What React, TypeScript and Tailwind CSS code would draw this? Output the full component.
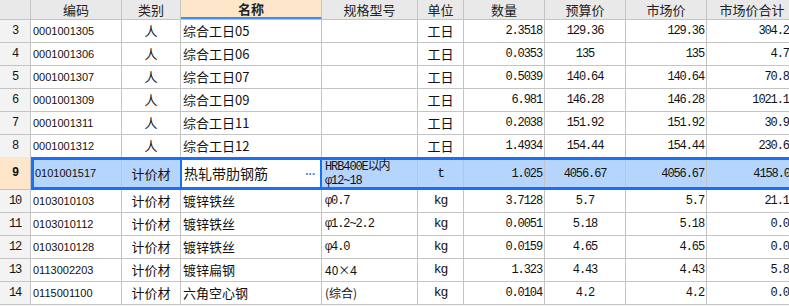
import React from "react"

type Row = {
  no: number
  code: string
  kind: string
  name: string
  spec: string[]
  unit: string
  qty: string
  budget: string
  market: string
  total: string
}

const rows: Row[] = [
  { no: 3, code: "0001001305", kind: "人", name: "综合工日05", spec: [], unit: "工日", qty: "2.3518", budget: "129.36", market: "129.36", total: "304.23" },
  { no: 4, code: "0001001306", kind: "人", name: "综合工日06", spec: [], unit: "工日", qty: "0.0353", budget: "135", market: "135", total: "4.77" },
  { no: 5, code: "0001001307", kind: "人", name: "综合工日07", spec: [], unit: "工日", qty: "0.5039", budget: "140.64", market: "140.64", total: "70.87" },
  { no: 6, code: "0001001309", kind: "人", name: "综合工日09", spec: [], unit: "工日", qty: "6.981", budget: "146.28", market: "146.28", total: "1021.18" },
  { no: 7, code: "0001001311", kind: "人", name: "综合工日11", spec: [], unit: "工日", qty: "0.2038", budget: "151.92", market: "151.92", total: "30.96" },
  { no: 8, code: "0001001312", kind: "人", name: "综合工日12", spec: [], unit: "工日", qty: "1.4934", budget: "154.44", market: "154.44", total: "230.64" },
  { no: 9, code: "0101001517", kind: "计价材", name: "热轧带肋钢筋", spec: ["HRB400E以内", "φ12~18"], unit: "t", qty: "1.025", budget: "4056.67", market: "4056.67", total: "4158.09" },
  { no: 10, code: "0103010103", kind: "计价材", name: "镀锌铁丝", spec: ["φ0.7"], unit: "kg", qty: "3.7128", budget: "5.7", market: "5.7", total: "21.16" },
  { no: 11, code: "0103010112", kind: "计价材", name: "镀锌铁丝", spec: ["φ1.2~2.2"], unit: "kg", qty: "0.0051", budget: "5.18", market: "5.18", total: "0.03" },
  { no: 12, code: "0103010128", kind: "计价材", name: "镀锌铁丝", spec: ["φ4.0"], unit: "kg", qty: "0.0159", budget: "4.65", market: "4.65", total: "0.07" },
  { no: 13, code: "0113002203", kind: "计价材", name: "镀锌扁钢", spec: ["40×4"], unit: "kg", qty: "1.323", budget: "4.43", market: "4.43", total: "5.86" },
  { no: 14, code: "0115001100", kind: "计价材", name: "六角空心钢", spec: ["(综合)"], unit: "kg", qty: "0.0104", budget: "4.2", market: "4.2", total: "0.04" },
]

const cjk = "font-['Noto_Sans_CJK_SC',sans-serif]"
const mono = "font-['Liberation_Mono','Noto_Sans_CJK_SC',monospace] tracking-[-1.1px]"
const code = "font-['Liberation_Sans',sans-serif] text-[11px]"
const line = "border-r border-[#c4c4c4]"

function Header() {
  const h = `flex items-center justify-center shrink-0 h-full ${line} text-[13px] text-[#222] ${cjk}`
  return (
    <div className="flex h-[20px] bg-[#e9e9e9] border-b border-[#c4c4c4]">
      <div className={`${h} w-[31px]`} />
      <div className={`${h} w-[91px]`}>编码</div>
      <div className={`${h} w-[59px]`}>类别</div>
      <div className={`${h} w-[141px] bg-[#fde6c9] font-bold border-b-2 border-b-[#3d8ef0]`}>名称</div>
      <div className={`${h} w-[96px]`}>规格型号</div>
      <div className={`${h} w-[46px]`}>单位</div>
      <div className={`${h} w-[81px]`}>数量</div>
      <div className={`${h} w-[81px]`}>预算价</div>
      <div className={`${h} w-[81px]`}>市场价</div>
      <div className={`${h} w-[91px]`}>市场价合计</div>
    </div>
  )
}

function Spec({ spec }: { spec: string[] }) {
  if (spec.length === 0) return null
  const isSans = spec[0] === "40×4" || spec[0] === "(综合)"
  return (
    <div className={`flex flex-col leading-[14px] text-[12px] ${isSans ? cjk : mono}`}>
      {spec.map((s) => (
        <span key={s} className="whitespace-nowrap">{s}</span>
      ))}
    </div>
  )
}

function PlainRow({ r }: { r: Row }) {
  const c = `flex items-center shrink-0 h-full ${line} text-[#111]`
  return (
    <div className="flex h-[23px] bg-white border-b border-[#c4c4c4]">
      <div className={`${c} w-[31px] justify-center bg-[#f3f3f3] text-[12px] ${mono}`}>{r.no}</div>
      <div className={`${c} w-[91px] pl-[2px] ${code}`}>{r.code}</div>
      <div className={`${c} w-[59px] justify-center text-[13px] ${cjk}`}>{r.kind}</div>
      <div className={`${c} w-[141px] pl-[2px] text-[13px] ${cjk}`}>{r.name}</div>
      <div className={`${c} w-[96px] pl-[3px]`}><Spec spec={r.spec} /></div>
      <div className={`${c} w-[46px] justify-center text-[13px] ${r.unit === "工日" ? cjk : mono}`}>{r.unit}</div>
      <div className={`${c} w-[81px] justify-end pr-[2px] text-[12px] ${mono}`}>{r.qty}</div>
      <div className={`${c} w-[81px] justify-center text-[12px] ${mono}`}>{r.budget}</div>
      <div className={`${c} w-[81px] justify-end pr-[2px] text-[12px] ${mono}`}>{r.market}</div>
      <div className={`${c} w-[91px] justify-end pr-[2px] text-[12px] ${mono}`}>{r.total}</div>
    </div>
  )
}

function SelectedRow({ r }: { r: Row }) {
  const c = `flex items-center shrink-0 h-full text-[#111]`
  return (
    <div className="flex h-[33px] -mt-px">
      <div className={`${c} w-[31px] justify-center bg-[#fde6c9] ${line} border-b text-[12px] font-bold ${mono}`}>{r.no}</div>
      <div className="flex h-full bg-[#b5d5fd] border-y-[3px] border-l-[3px] border-[#1a6ff2]">
        <div className={`${c} w-[88px] pl-[1px] ${line} ${code}`}>{r.code}</div>
        <div className={`${c} w-[58px] justify-center text-[13px] ${cjk}`}>{r.kind}</div>
        <div className={`${c} w-[142px] pl-[2px] bg-white border-x-2 border-[#1a6ff2] text-[14px] ${cjk}`}>
          <span className="flex-1">{r.name}</span>
          <span className="pr-[5px] text-[13px] leading-none text-[#4a8ed6] font-bold tracking-[-1px] font-['Liberation_Sans',sans-serif]">···</span>
        </div>
        <div className={`${c} w-[96px] pl-[3px] ${line}`}><Spec spec={r.spec} /></div>
        <div className={`${c} w-[46px] justify-center text-[13px] ${line} ${mono}`}>{r.unit}</div>
        <div className={`${c} w-[81px] justify-end pr-[2px] text-[12px] ${line} ${mono}`}>{r.qty}</div>
        <div className={`${c} w-[81px] justify-center text-[12px] ${line} ${mono}`}>{r.budget}</div>
        <div className={`${c} w-[81px] justify-end pr-[2px] text-[12px] ${line} ${mono}`}>{r.market}</div>
        <div className={`${c} w-[91px] justify-end pr-[2px] text-[12px] ${mono}`}>{r.total}</div>
      </div>
    </div>
  )
}

export default function App() {
  return (
    <div className="w-[789px] h-[306px] overflow-hidden bg-[#f7f7f7]">
      <div className="w-[820px]">
        <Header />
        {rows.map((r) => (r.no === 9 ? <SelectedRow key={r.no} r={r} /> : <PlainRow key={r.no} r={r} />))}
      </div>
    </div>
  )
}
